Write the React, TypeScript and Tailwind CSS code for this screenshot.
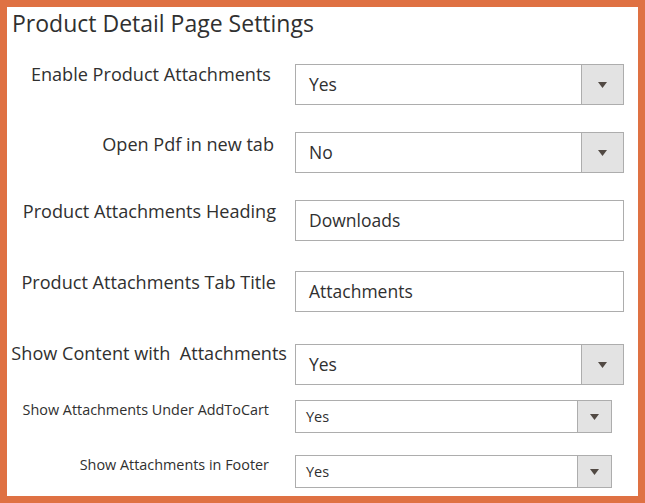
import React from 'react';

type Row = {
  label: string;
  kind: 'select' | 'text';
  value: string;
  small?: boolean;
  mt: string;
  labelClass: string;
};

const ROWS: Row[] = [
  { label: 'Enable Product Attachments', kind: 'select', value: 'Yes', mt: 'mt-[28px]', labelClass: 'pr-[24px] mt-0' },
  { label: 'Open Pdf in new tab', kind: 'select', value: 'No', mt: 'mt-[27px]', labelClass: 'pr-[21px] mt-[2px]' },
  { label: 'Product Attachments Heading', kind: 'text', value: 'Downloads', mt: 'mt-[27px]', labelClass: 'pr-[19px] mt-[1px]' },
  { label: 'Product Attachments Tab Title', kind: 'text', value: 'Attachments', mt: 'mt-[30px]', labelClass: 'pr-[19px] mt-[1px]' },
  { label: 'Show Content with\u00a0 Attachments', kind: 'select', value: 'Yes', mt: 'mt-[32px]', labelClass: 'pr-[8px] -mt-[1px]' },
  { label: 'Show Attachments Under AddToCart', kind: 'select', value: 'Yes', small: true, mt: 'mt-[15px]', labelClass: 'pr-[26px] mt-0' },
  { label: 'Show Attachments in Footer', kind: 'select', value: 'Yes', small: true, mt: 'mt-[22px]', labelClass: 'pr-[26px] mt-0' },
];

const Arrow = () => (
  <svg width="9" height="6" viewBox="0 0 9 6" aria-hidden="true">
    <polygon points="0,0 9,0 4.5,6" fill="#514943" />
  </svg>
);

const Control: React.FC<{ row: Row }> = ({ row }) => {
  if (row.kind === 'text') {
    return (
      <div className="w-[329px] h-[41px] border border-[#adadad] bg-white flex items-center pl-[13px] text-[17.5px] text-[#303030]">
        {row.value}
      </div>
    );
  }
  if (row.small) {
    return (
      <div className="w-[317px] h-[33px] border border-[#adadad] bg-white flex">
        <div className="flex-1 flex items-center pl-[10px] text-[14.5px] text-[#303030]">{row.value}</div>
        <div className="w-[34px] border-l border-[#adadad] bg-[#e3e3e3] flex items-center justify-center">
          <Arrow />
        </div>
      </div>
    );
  }
  return (
    <div className="w-[329px] h-[41px] border border-[#adadad] bg-white flex">
      <div className="flex-1 flex items-center pl-[13px] text-[17.5px] text-[#303030]">{row.value}</div>
      <div className="w-[42px] border-l border-[#adadad] bg-[#e3e3e3] flex items-center justify-center">
        <Arrow />
      </div>
    </div>
  );
};

export default function App() {
  return (
    <div className="w-[645px] h-[503px] border-[7px] border-[#df7143] bg-white font-['Open_Sans',sans-serif]">
      <h1 className="pl-[5px] pt-[3px] text-[23px] leading-[26px] text-[#303030]">
        Product Detail Page Settings
      </h1>
      {ROWS.map((row) => (
        <div key={row.label} className={`flex items-start ${row.mt}`}>
          <div
            className={`w-[288px] shrink-0 text-right whitespace-nowrap text-[#303030] ${
              row.small ? 'text-[14.4px] leading-[20px]' : 'text-[18.1px] leading-[20px]'
            } ${row.labelClass}`}
          >
            {row.label}
          </div>
          <Control row={row} />
        </div>
      ))}
    </div>
  );
}
